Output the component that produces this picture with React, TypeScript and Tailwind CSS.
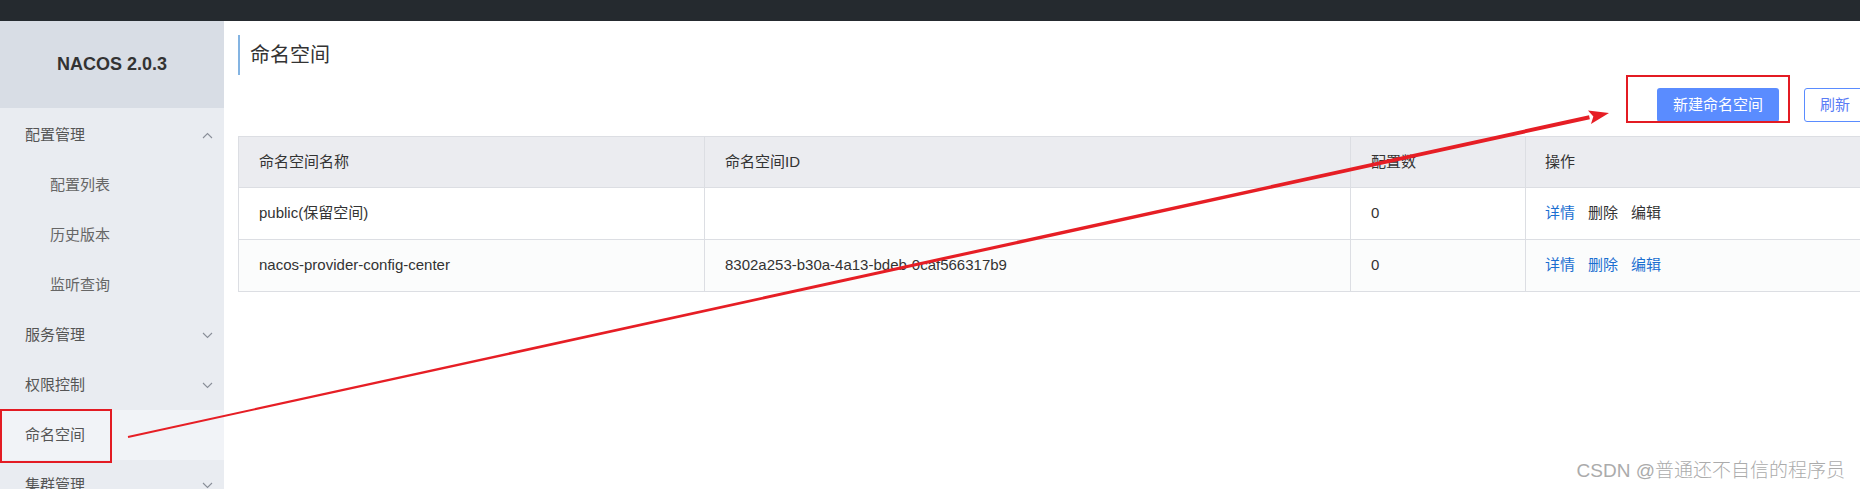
import React from "react";

const FONT = { fontFamily: '"Liberation Sans", "Noto Sans CJK SC", sans-serif' };

type MenuItem = { label: string; sub?: boolean; chevron?: "up" | "down"; active?: boolean };

const menu: MenuItem[] = [
  { label: "配置管理", chevron: "up" },
  { label: "配置列表", sub: true },
  { label: "历史版本", sub: true },
  { label: "监听查询", sub: true },
  { label: "服务管理", chevron: "down" },
  { label: "权限控制", chevron: "down" },
  { label: "命名空间", active: true },
  { label: "集群管理", chevron: "down" },
];

function Chevron({ dir }: { dir: "up" | "down" }) {
  return (
    <svg width="11" height="7" viewBox="0 0 11 7" className="text-[#8a8f99]">
      {dir === "up" ? (
        <polyline points="1,6 5.5,1.5 10,6" fill="none" stroke="currentColor" strokeWidth="1.1" />
      ) : (
        <polyline points="1,1 5.5,5.5 10,1" fill="none" stroke="currentColor" strokeWidth="1.1" />
      )}
    </svg>
  );
}

function Sidebar() {
  return (
    <aside className="w-[224px] shrink-0 bg-[#e9ecf1] flex flex-col">
      <div className="h-[87px] bg-[#d8dde5] flex items-center justify-center">
        <span className="text-[18px] font-bold text-[#333]">NACOS 2.0.3</span>
      </div>
      <ul className="pt-[2px]">
        {menu.map((m) => (
          <li
            key={m.label}
            className={
              "h-[50px] flex items-center justify-between pr-[11px] text-[15px] " +
              (m.sub ? "pl-[50px] text-[#666] " : "pl-[25px] text-[#555] ") +
              (m.active ? "bg-[#f1f3f7] text-[#333]" : "")
            }
          >
            <span>{m.label}</span>
            {m.chevron && <Chevron dir={m.chevron} />}
          </li>
        ))}
      </ul>
    </aside>
  );
}

type Row = { name: string; id: string; count: string; disabled?: boolean; bg: string };

const rows: Row[] = [
  { name: "public(保留空间)", id: "", count: "0", disabled: true, bg: "bg-white" },
  {
    name: "nacos-provider-config-center",
    id: "8302a253-b30a-4a13-bdeb-0caf566317b9",
    count: "0",
    bg: "bg-[#fbfcfc]",
  },
];

function NamespaceTable() {
  return (
    <div className="w-[1650px] border-t border-l border-[#dcdee3] text-[15px] text-[#333]">
      <div className="flex h-[51px] bg-[#ebecf0] border-b border-[#dcdee3]">
        <div className="w-[466px] px-[20px] flex items-center border-r border-[#dcdee3]">命名空间名称</div>
        <div className="w-[646px] px-[20px] flex items-center border-r border-[#dcdee3]">命名空间ID</div>
        <div className="w-[175px] px-[20px] flex items-center border-r border-[#dcdee3]">配置数</div>
        <div className="flex-1 px-[19px] flex items-center">操作</div>
      </div>
      {rows.map((r) => (
        <div key={r.name} className={"flex h-[52px] border-b border-[#dcdee3] " + r.bg}>
          <div className="w-[466px] px-[20px] flex items-center border-r border-[#dcdee3]">{r.name}</div>
          <div className="w-[646px] px-[20px] flex items-center border-r border-[#dcdee3]">{r.id}</div>
          <div className="w-[175px] px-[20px] flex items-center border-r border-[#dcdee3]">{r.count}</div>
          <div className="flex-1 px-[19px] flex items-center gap-[13px]">
            <a className="text-[#1a6fd1]">详情</a>
            <a className={r.disabled ? "text-[#333]" : "text-[#1a6fd1]"}>删除</a>
            <a className={r.disabled ? "text-[#333]" : "text-[#1a6fd1]"}>编辑</a>
          </div>
        </div>
      ))}
    </div>
  );
}

function Annotations() {
  // tapered arrow from the sidebar item to the button
  const sx = 128, sy = 437, tx = 1609, ty = 113;
  const dx = tx - sx, dy = ty - sy;
  const len = Math.hypot(dx, dy);
  const ux = dx / len, uy = dy / len;
  const nx = -uy, ny = ux;
  const bx = tx - 20 * ux, by = ty - 20 * uy;
  const line = [
    [sx + nx * 1, sy + ny * 1],
    [bx + nx * 2, by + ny * 2],
    [bx - nx * 2, by - ny * 2],
    [sx - nx * 1, sy - ny * 1],
  ];
  const head = [
    [tx, ty],
    [bx + nx * 7, by + ny * 7],
    [bx + ux * 4, by + uy * 4],
    [bx - nx * 7, by - ny * 7],
  ];
  const pts = (p: number[][]) => p.map((q) => q.join(",")).join(" ");
  return (
    <>
      <div className="absolute left-0 top-[409px] w-[112px] h-[54px] border-2 border-[#e31b23] pointer-events-none" />
      <div className="absolute left-[1626px] top-[75px] w-[164px] h-[48px] border-2 border-[#e31b23] pointer-events-none" />
      <svg className="absolute inset-0 pointer-events-none" width="1860" height="489">
        <polygon points={pts(line)} fill="#e61e25" />
        <polygon points={pts(head)} fill="#e61e25" />
      </svg>
      <div className="absolute right-[15px] top-[457px] text-[19px] font-light text-[#ababab]">
        CSDN @普通还不自信的程序员
      </div>
    </>
  );
}

export default function App() {
  return (
    <div className="relative w-[1860px] h-[489px] overflow-hidden bg-white" style={FONT}>
      <div className="h-[21px] bg-[#252a2f]" />
      <div className="flex">
        <Sidebar />
        <main className="pl-[14px] pt-[14px] flex flex-col">
          <div className="h-[40px] border-l-2 border-[#84b4e2] pl-[10px] flex items-center text-[20px] text-[#333]">
            命名空间
          </div>
          <div className="w-[1650px] flex justify-end gap-[25px] pr-[20px] mt-[13px] mb-[14px]">
            <button className="w-[122px] h-[34px] rounded-[3px] bg-[#5a8cff] text-white text-[15px]">
              新建命名空间
            </button>
            <button className="w-[64px] h-[34px] rounded-[3px] border border-[#5a8cff] bg-white text-[#5a7cf5] text-[15px] text-left pl-[15px]">
              刷新
            </button>
          </div>
          <NamespaceTable />
        </main>
      </div>
      <Annotations />
    </div>
  );
}
